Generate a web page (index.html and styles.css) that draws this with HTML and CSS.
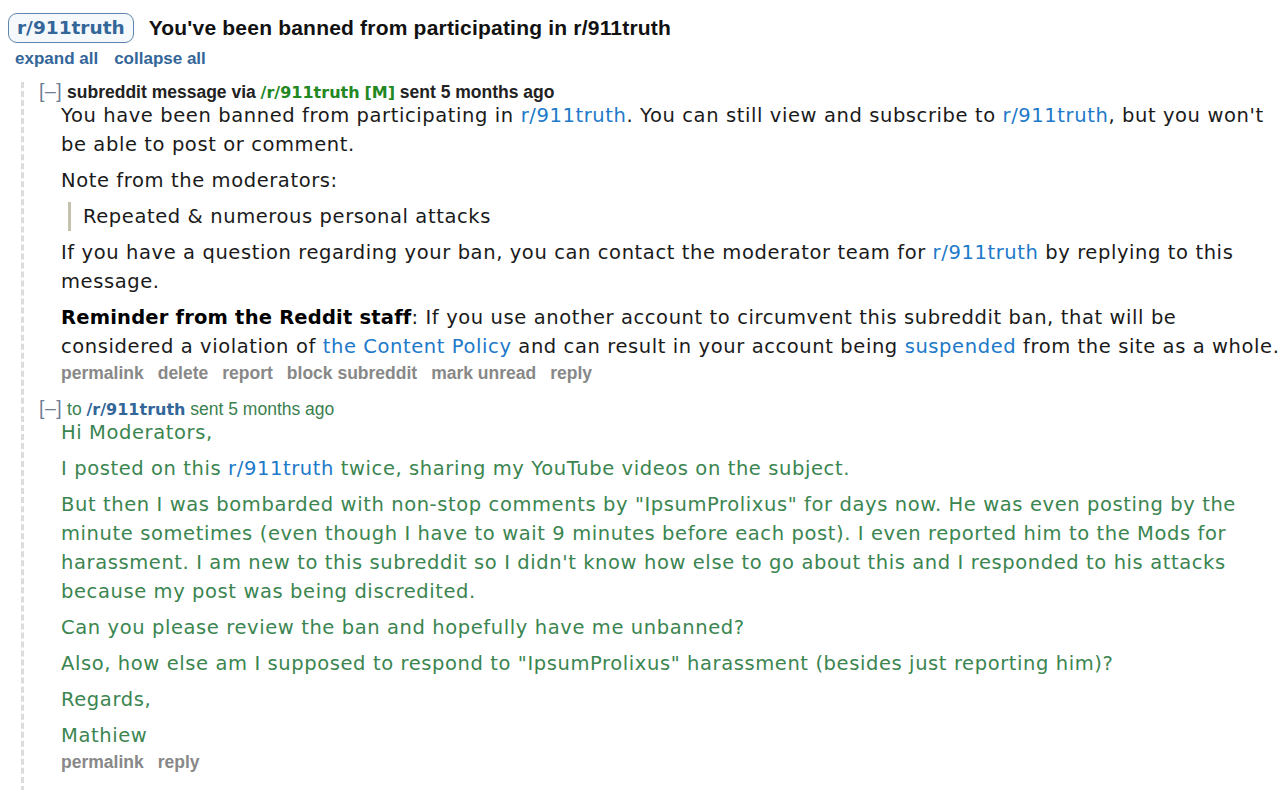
FILE: index.html
```html
<!DOCTYPE html>
<html>
<head>
<meta charset="utf-8">
<link rel="stylesheet" href="styles.css">
</head>
<body>
<div class="page">
  <div class="header">
    <a class="pill">r/911truth</a>
    <span class="title">You've been banned from participating in r/911truth</span>
  </div>
  <div class="expand">
    <a>expand all</a>
    <a>collapse all</a>
  </div>
  <div class="thread">
    <div class="message">
      <div class="tagline">
        <span class="toggle">[–]</span> subreddit message via <a class="modlink">/r/911truth</a> <span class="mod">[M]</span> sent 5 months ago
      </div>
      <div class="md">
        <p>You have been banned from participating in <a>r/911truth</a>. You can still view and subscribe to <a>r/911truth</a>, but you won't be able to post or comment.</p>
        <p>Note from the moderators:</p>
        <blockquote><p>Repeated &amp; numerous personal attacks</p></blockquote>
        <p>If you have a question regarding your ban, you can contact the moderator team for <a>r/911truth</a> by replying to this message.</p>
        <p><strong>Reminder from the Reddit staff</strong>: If you use another account to circumvent this subreddit ban, that will be considered a violation of <a>the Content Policy</a> and can result in your account being <a>suspended</a> from the site as a whole.</p>
      </div>
      <ul class="buttons">
        <li>permalink</li>
        <li>delete</li>
        <li>report</li>
        <li>block subreddit</li>
        <li>mark unread</li>
        <li>reply</li>
      </ul>
    </div>
    <div class="message sent">
      <div class="tagline">
        <span class="toggle">[–]</span> to <a class="sentto">/r/911truth</a> sent 5 months ago
      </div>
      <div class="md">
        <p>Hi Moderators,</p>
        <p>I posted on this <a>r/911truth</a> twice, sharing my YouTube videos on the subject.</p>
        <p>But then I was bombarded with non-stop comments by "IpsumProlixus" for days now. He was even posting by the minute sometimes (even though I have to wait 9 minutes before each post). I even reported him to the Mods for harassment. I am new to this subreddit so I didn't know how else to go about this and I responded to his attacks because my post was being discredited.</p>
        <p>Can you please review the ban and hopefully have me unbanned?</p>
        <p>Also, how else am I supposed to respond to "IpsumProlixus" harassment (besides just reporting him)?</p>
        <p>Regards,</p>
        <p>Mathiew</p>
      </div>
      <ul class="buttons">
        <li>permalink</li>
        <li>reply</li>
      </ul>
    </div>
  </div>
</div>
</body>
</html>
```

FILE: styles.css
```css
html, body {
  margin: 0;
  padding: 0;
  background: #ffffff;
  overflow: hidden;
}

.page {
  padding: 13px 0 0 8px;
  font-family: "Liberation Sans", Arial, sans-serif;
  color: #000;
}

.header {
  display: flex;
  align-items: center;
  gap: 15px;
  height: 30px;
}

.pill {
  display: inline-block;
  box-sizing: border-box;
  height: 30px;
  line-height: 27px;
  padding: 0 8px 0 8px;
  border: 1.5px solid #5f86ad;
  border-radius: 9px;
  font-family: "DejaVu Sans", Verdana, sans-serif;
  font-weight: bold;
  font-size: 18.5px;
  color: #336699;
  background: #f6f9fc;
}

.title {
  font-weight: bold;
  font-size: 21px;
  letter-spacing: 0.2px;
  color: #111;
}

.expand {
  display: flex;
  gap: 16px;
  margin: 6px 0 0 7px;
  font-weight: bold;
  font-size: 17px;
  line-height: 20px;
  color: #336699;
}

.thread {
  margin: 13px 0 0 13px;
  border-left: 3px dashed #dcdcdc;
  padding: 0 0 40px 15px;
}

.message {
  padding-bottom: 16px;
}

.tagline {
  height: 20px;
  font-size: 17.5px;
  font-weight: bold;
  line-height: 20px;
  color: #222;
}

.toggle {
  font-weight: normal;
  font-size: 19.5px;
  line-height: 16px;
  letter-spacing: 0.5px;
  color: #6f7e96;
}

.modlink {
  font-family: "DejaVu Sans", Verdana, sans-serif;
  font-size: 16px;
  color: #228822;
}

.mod {
  font-family: "DejaVu Sans", Verdana, sans-serif;
  font-size: 16px;
  color: #228822;
}

.sent .tagline {
  font-weight: normal;
  color: #3b7f4f;
}

.sentto {
  font-family: "DejaVu Sans", Verdana, sans-serif;
  font-size: 16px;
  font-weight: bold;
  color: #336699;
}

.md {
  margin: -1px 0 0 22px;
  font-family: "DejaVu Sans", Verdana, sans-serif;
  font-size: 19.5px;
  letter-spacing: 0.6px;
  line-height: 29px;
  color: #1a1a1a;
}

.md p {
  margin: 0 0 7px 0;
}

.md a {
  color: #2079c9;
}

.md strong {
  font-weight: bold;
  letter-spacing: 0.2px;
  color: #000;
}

.md blockquote {
  margin: 0 0 7px 7px;
  padding-left: 12px;
  border-left: 3px solid #c5c1ad;
}

.sent .md {
  color: #3b8550;
}

.buttons {
  display: flex;
  gap: 14px;
  list-style: none;
  margin: -5px 0 0 22px;
  padding: 0;
  font-size: 17.5px;
  font-weight: bold;
  line-height: 20px;
  color: #888888;
}
```
